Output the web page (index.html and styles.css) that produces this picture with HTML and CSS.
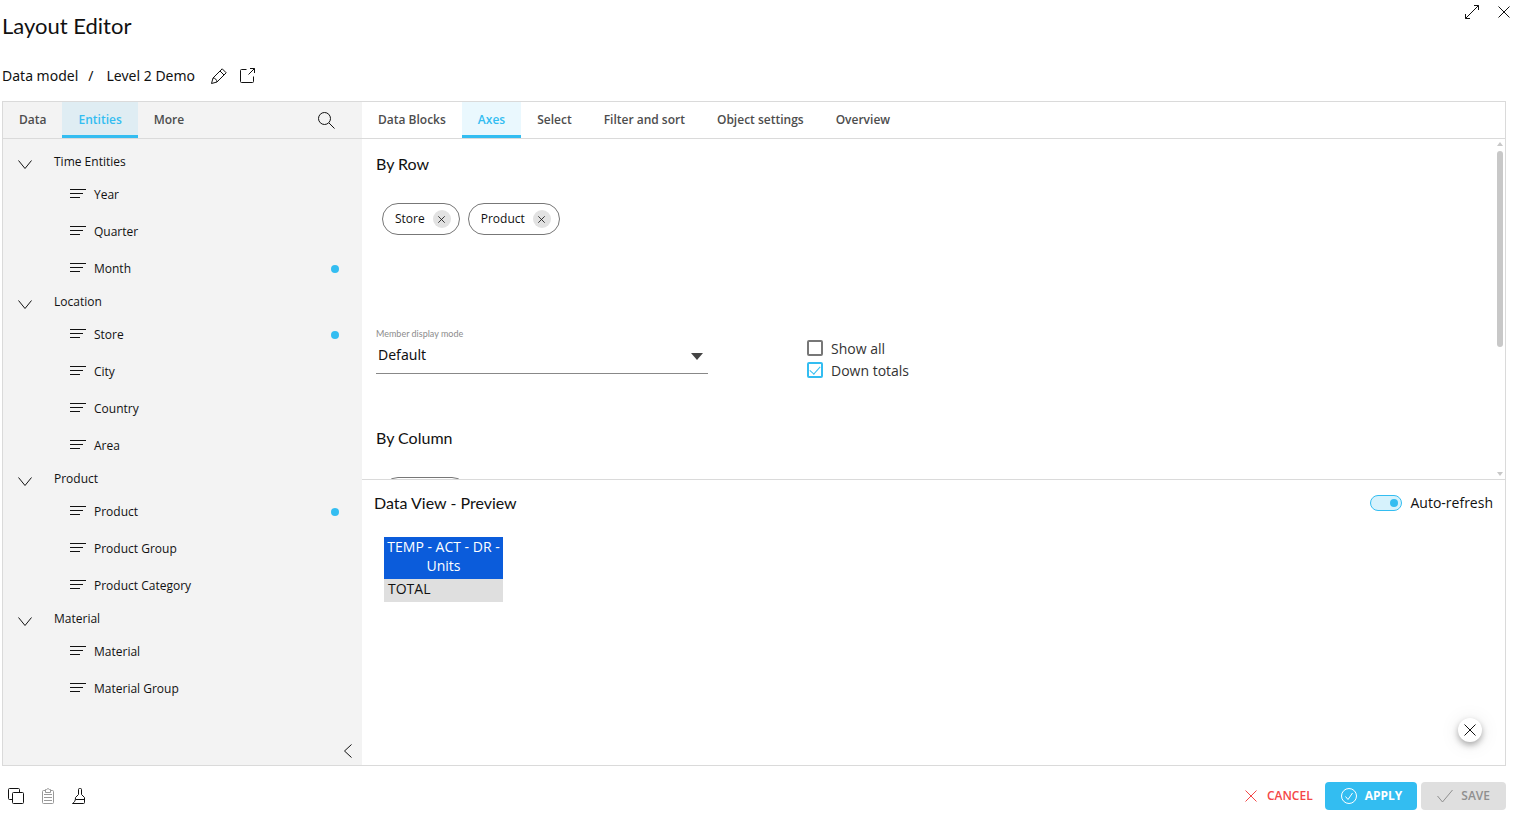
FILE: index.html
```html
<!DOCTYPE html>
<html lang="en">
<head>
    <meta charset="UTF-8">
    <meta name="viewport" content="width=device-width, initial-scale=1.0">
    <title>Layout Editor</title>
    <link rel="stylesheet" href="styles.css">
</head>
<body>
    <!-- shared icons -->
    <svg class="sprite" aria-hidden="true">
        <symbol id="i-close" viewBox="0 0 12 12"><path d="M0.5 0.5L11.5 11.5M11.5 0.5L0.5 11.5"/></symbol>
        <symbol id="i-down" viewBox="0 0 14 10"><path d="M0.5 0.5L7 8.5L13.5 0.5"/></symbol>
        <symbol id="i-lines" viewBox="0 0 16 10"><path d="M0 0.5H16M0 4.5H13M0 8.5H10"/></symbol>
    </svg>

    <div class="page">
        <header class="header">
            <h1>Layout Editor</h1>
            <div class="window-buttons">
                <button class="icon-btn" aria-label="Expand">
                    <svg width="14" height="14" viewBox="0 0 14 14"><path d="M0.5 13.5L13.5 0.5M9 0.5H13.5V5M0.5 9V13.5H5"/></svg>
                </button>
                <button class="icon-btn" aria-label="Close">
                    <svg width="12" height="12"><use href="#i-close"/></svg>
                </button>
            </div>
        </header>

        <nav class="breadcrumb">
            <span>Data model</span>
            <span class="slash">/</span>
            <span>Level 2 Demo</span>
            <div class="breadcrumb-tools">
                <button class="icon-btn" aria-label="Rename">
                    <svg width="16" height="16" viewBox="0 0 16 16"><path d="M0.5 15.5L2 10L11.2 0.8L15.2 4.8L6 14L0.5 15.5ZM9 3L13 7M2 10C4 9.8 6 12 6 14M6.5 5.5L10 2"/></svg>
                </button>
                <button class="icon-btn" aria-label="Open in new window">
                    <svg width="15" height="15" viewBox="0 0 15 15"><path d="M6.5 1.5H1.5Q0.5 1.5 0.5 2.5V13.5Q0.5 14.5 1.5 14.5H12.5Q13.5 14.5 13.5 13.5V8.5M10 0.5H14.5V5M14.5 0.5L8.5 6.5"/></svg>
                </button>
            </div>
        </nav>

        <div class="editor">
            <aside class="sidebar">
                <div class="tabs">
                    <button class="tab">Data</button>
                    <button class="tab active">Entities</button>
                    <button class="tab">More</button>
                    <button class="icon-btn search" aria-label="Search">
                        <svg width="17" height="17" viewBox="0 0 17 17"><circle cx="6.5" cy="6.5" r="6"/><path d="M11 11L16.5 16.5"/></svg>
                    </button>
                </div>
                <div class="tree">
                    <h3><svg width="14" height="10"><use href="#i-down"/></svg>Time Entities</h3>
                    <ul>
                        <li><svg width="16" height="10"><use href="#i-lines"/></svg>Year</li>
                        <li><svg width="16" height="10"><use href="#i-lines"/></svg>Quarter</li>
                        <li class="used"><svg width="16" height="10"><use href="#i-lines"/></svg>Month</li>
                    </ul>
                    <h3><svg width="14" height="10"><use href="#i-down"/></svg>Location</h3>
                    <ul>
                        <li class="used"><svg width="16" height="10"><use href="#i-lines"/></svg>Store</li>
                        <li><svg width="16" height="10"><use href="#i-lines"/></svg>City</li>
                        <li><svg width="16" height="10"><use href="#i-lines"/></svg>Country</li>
                        <li><svg width="16" height="10"><use href="#i-lines"/></svg>Area</li>
                    </ul>
                    <h3><svg width="14" height="10"><use href="#i-down"/></svg>Product</h3>
                    <ul>
                        <li class="used"><svg width="16" height="10"><use href="#i-lines"/></svg>Product</li>
                        <li><svg width="16" height="10"><use href="#i-lines"/></svg>Product Group</li>
                        <li><svg width="16" height="10"><use href="#i-lines"/></svg>Product Category</li>
                    </ul>
                    <h3><svg width="14" height="10"><use href="#i-down"/></svg>Material</h3>
                    <ul>
                        <li><svg width="16" height="10"><use href="#i-lines"/></svg>Material</li>
                        <li><svg width="16" height="10"><use href="#i-lines"/></svg>Material Group</li>
                    </ul>
                </div>
                <button class="icon-btn collapse" aria-label="Collapse panel">
                    <svg width="8" height="14" viewBox="0 0 8 14"><path d="M7.5 0.5L0.5 7L7.5 13.5"/></svg>
                </button>
            </aside>

            <main class="main">
                <div class="tabs">
                    <button class="tab">Data Blocks</button>
                    <button class="tab active">Axes</button>
                    <button class="tab">Select</button>
                    <button class="tab">Filter and sort</button>
                    <button class="tab">Object settings</button>
                    <button class="tab">Overview</button>
                </div>

                <div class="axes">
                    <div class="axes-content">
                        <section class="axis">
                            <h2>By Row</h2>
                            <div class="chips">
                                <span class="chip">Store <button aria-label="Remove Store"><svg width="7" height="7"><use href="#i-close"/></svg></button></span>
                                <span class="chip">Product <button aria-label="Remove Product"><svg width="7" height="7"><use href="#i-close"/></svg></button></span>
                            </div>
                            <div class="options">
                                <div class="field">
                                    <label for="row-mode">Member display mode</label>
                                    <div class="select">
                                        <select id="row-mode">
                                            <option>Default</option>
                                        </select>
                                        <svg width="12" height="7" viewBox="0 0 12 7"><path d="M0 0H12L6 7Z"/></svg>
                                    </div>
                                </div>
                                <div class="checks">
                                    <label><input type="checkbox"> Show all</label>
                                    <label><input type="checkbox" checked> Down totals</label>
                                </div>
                            </div>
                        </section>
                        <section class="axis">
                            <h2>By Column</h2>
                            <div class="chips">
                                <span class="chip empty"></span>
                            </div>
                        </section>
                    </div>
                    <div class="scrollbar">
                        <svg width="6" height="4" viewBox="0 0 6 4"><path d="M0 4L3 0L6 4Z"/></svg>
                        <div class="track"><div class="thumb"></div></div>
                        <svg width="6" height="4" viewBox="0 0 6 4"><path d="M0 0L3 4L6 0Z"/></svg>
                    </div>
                </div>

                <section class="preview">
                    <div class="preview-head">
                        <h2>Data View - Preview</h2>
                        <label class="toggle"><input type="checkbox" checked> Auto-refresh</label>
                    </div>
                    <table>
                        <tr><th>TEMP - ACT - DR - Units</th></tr>
                        <tr><td>TOTAL</td></tr>
                    </table>
                    <button class="close-preview" aria-label="Close preview">
                        <svg width="12" height="12"><use href="#i-close"/></svg>
                    </button>
                </section>
            </main>
        </div>

        <footer class="footer">
            <div class="tools">
                <button class="icon-btn" aria-label="Copy">
                    <svg width="16" height="16" viewBox="0 0 16 16"><path d="M4.5 11.5H1.5Q0.5 11.5 0.5 10.5V1.5Q0.5 0.5 1.5 0.5H10.5Q11.5 0.5 11.5 1.5V4.5"/><rect x="4.5" y="4.5" width="11" height="11" rx="1"/></svg>
                </button>
                <button class="icon-btn" aria-label="Paste" disabled>
                    <svg width="12" height="16" viewBox="0 0 12 16"><path d="M3.5 2.5H1.5Q0.5 2.5 0.5 3.5V14.5Q0.5 15.5 1.5 15.5H10.5Q11.5 15.5 11.5 14.5V3.5Q11.5 2.5 10.5 2.5H8.5M3.5 1.5H4.5Q6 -0.5 7.5 1.5H8.5V4.5H3.5ZM2 6.5H10M2 9.5H10M2 12.5H10"/></svg>
                </button>
                <button class="icon-btn" aria-label="Clear format">
                    <svg width="14" height="16" viewBox="0 0 14 16"><path d="M6.5 6.5V1.5Q6.5 0.5 7.5 0.5H8.5Q9.5 0.5 9.5 1.5V6.5L12.5 9.5V14.5Q12.5 15.5 11.5 15.5H0.5C2.5 14 3.5 13 3.5 9.5L6.5 6.5M3.5 11.5H12.5"/></svg>
                </button>
            </div>
            <div class="actions">
                <button class="btn cancel"><svg width="12" height="12"><use href="#i-close"/></svg>CANCEL</button>
                <button class="btn apply">
                    <svg width="16" height="16" viewBox="0 0 16 16"><circle cx="8" cy="8" r="7.5"/><path d="M4.5 8.5L7 11.5L11.5 5"/></svg>APPLY
                </button>
                <button class="btn save" disabled>
                    <svg width="16" height="14" viewBox="0 0 16 14"><path d="M0.5 7L5.5 13L15.5 1"/></svg>SAVE
                </button>
            </div>
        </footer>
    </div>
</body>
</html>
```

FILE: styles.css
```css
* {
    box-sizing: border-box;
}

body {
    margin: 0;
    font-family: "Open Sans", "Noto Sans", sans-serif;
    font-size: 14px;
    line-height: 20px;
    color: #111;
    background-color: #fff;
}

h1, h2, h3, ul {
    margin: 0;
    padding: 0;
    font-weight: 400;
}

ul {
    list-style: none;
}

button, select {
    font: inherit;
    color: inherit;
    padding: 0;
    border: none;
    background: none;
}

svg {
    display: block;
    flex: none;
    fill: none;
    stroke: currentColor;
}

.sprite {
    display: none;
}

.page {
    display: flex;
    flex-direction: column;
    min-height: 100vh;
    padding: 0 8px 0 2px;
}

/* header */

.header {
    display: flex;
    justify-content: space-between;
    height: 52px;
}

.header h1 {
    padding-top: 12px;
    font-family: Lato, sans-serif;
    font-size: 22px;
    line-height: 28px;
}

.window-buttons {
    display: flex;
    gap: 19px;
    height: 24px;
    margin-right: -4px;
}

.icon-btn {
    display: flex;
    align-items: center;
}

.breadcrumb {
    display: flex;
    align-items: center;
    height: 49px;
    padding-bottom: 2px;
    font-family: "Noto Sans", sans-serif;
}

.slash {
    margin: 0 13px 0 10px;
}

.breadcrumb-tools {
    display: flex;
    gap: 13px;
    padding-left: 16px;
}

/* editor */

.editor {
    display: flex;
    flex: 1;
    border: 1px solid #dadada;
}

.sidebar {
    display: flex;
    flex-direction: column;
    flex: 0 0 359px;
    background-color: #f3f3f3;
}

.tabs {
    display: flex;
    height: 37px;
    border-bottom: 1px solid #dadada;
}

.tab {
    padding: 0 16px;
    border-top: 3px solid transparent;
    border-bottom: 3px solid transparent;
    font-size: 12px;
    font-weight: 600;
    color: #4d4d4d;
}

.tab.active {
    border-bottom-color: #33bdf1;
    background-color: rgba(51, 189, 241, 0.1);
    color: #33bdf1;
}

.search {
    margin: 0 27px 0 auto;
}

.tree {
    flex: 1;
    padding-top: 8px;
    font-size: 12px;
}

.tree h3 {
    display: flex;
    align-items: center;
    height: 29px;
    padding-left: 15px;
    font-size: 12px;
}

.tree h3 svg {
    margin: 6px 22px 0 0;
}

.tree li {
    display: flex;
    align-items: center;
    gap: 8px;
    height: 37px;
    padding: 0 23px 0 67px;
}

.tree li svg {
    margin-bottom: 2px;
}

.tree .used::after {
    content: "";
    width: 8px;
    height: 8px;
    margin-left: auto;
    border-radius: 50%;
    background-color: #33bdf1;
}

.collapse {
    align-self: flex-end;
    height: 28px;
    margin-right: 10px;
}

.main {
    display: flex;
    flex-direction: column;
    flex: 1;
    min-width: 0;
}

/* axes */

.axes {
    display: flex;
    flex: 341 0 0;
    min-height: 0;
    overflow: hidden;
    border-bottom: 1px solid #dadada;
}

.axes-content {
    flex: 1;
    height: 0;
    padding: 15px 14px 0;
}

.axis h2, .preview h2 {
    font-family: Lato, sans-serif;
    font-size: 16px;
    line-height: 20px;
}

.chips {
    display: flex;
    align-items: flex-start;
    gap: 8px;
    min-height: 124px;
    margin-top: 29px;
    padding-left: 6px;
}

.chip {
    display: flex;
    align-items: center;
    gap: 8px;
    height: 32px;
    padding: 0 8px 0 12px;
    border: 1px solid #777;
    border-radius: 16px;
    font-size: 12px;
}

.chip.empty {
    width: 86px;
}

.chip button {
    display: flex;
    align-items: center;
    justify-content: center;
    width: 18px;
    height: 18px;
    border-radius: 50%;
    background-color: #e2e2e2;
}

.chip svg {
    stroke-width: 1.4;
}

.options {
    display: flex;
    gap: 99px;
    margin-bottom: 46px;
}

.field {
    width: 332px;
}

.field label {
    display: block;
    font-family: Lato, sans-serif;
    font-size: 9px;
    line-height: 14px;
    color: #8c8c8c;
}

.select {
    display: flex;
    align-items: center;
    height: 33px;
    padding-right: 5px;
    border-bottom: 1px solid #888;
}

.select select {
    flex: 1;
    height: 32px;
    padding: 0 0 4px 2px;
    font-family: "Noto Sans", sans-serif;
    appearance: none;
}

.select svg {
    margin-bottom: 2px;
    fill: #444;
    stroke: none;
}

.checks {
    padding-top: 11px;
}

.checks label {
    display: flex;
    align-items: center;
    gap: 8px;
    height: 22px;
    color: #333;
}

.checks input {
    display: flex;
    justify-content: center;
    width: 16px;
    height: 16px;
    margin: 0 0 2px;
    border: 2px solid #777;
    border-radius: 2px;
    appearance: none;
}

.checks input:checked {
    border-color: #33bdf1;
}

.checks input:checked::after {
    content: "";
    width: 5px;
    height: 9px;
    border: solid #33bdf1;
    border-width: 0 1px 1px 0;
    transform: rotate(42deg);
}

.scrollbar {
    display: flex;
    flex-direction: column;
    align-items: center;
    width: 10px;
    padding: 3px 0;
}

.scrollbar svg {
    fill: #c8c8c8;
    stroke: none;
}

.track {
    flex: 1;
    padding: 5px 0;
}

.thumb {
    width: 6px;
    height: 62%;
    border-radius: 3px;
    background-color: #c8c8c8;
}

/* preview */

.preview {
    position: relative;
    flex: 260 0 0;
    padding: 13px 12px;
}

.preview-head {
    display: flex;
    justify-content: space-between;
    height: 20px;
}

.toggle {
    display: flex;
    align-items: center;
    gap: 9px;
}

.toggle input {
    display: flex;
    align-items: center;
    justify-content: flex-end;
    width: 32px;
    height: 16px;
    margin: 0;
    padding-right: 3px;
    border: 1px solid #33bdf1;
    border-radius: 8px;
    background-color: #d6f2fc;
    appearance: none;
}

.toggle input::after {
    content: "";
    width: 8px;
    height: 8px;
    border-radius: 50%;
    background-color: #33bdf1;
}

.preview table {
    width: 119px;
    margin: 24px 0 0 10px;
    border-collapse: collapse;
    line-height: 19px;
}

.preview th {
    padding: 0 2px 4px;
    font-weight: 400;
    color: #fff;
    background-color: #0b5cdb;
}

.preview td {
    padding: 0 4px 4px;
    background-color: #dfdfdf;
}

.close-preview {
    position: absolute;
    right: 23px;
    bottom: 23px;
    display: flex;
    align-items: center;
    justify-content: center;
    width: 24px;
    height: 24px;
    border-radius: 50%;
    background-color: #fff;
    box-shadow: 0 3px 6px rgba(0, 0, 0, 0.3), 0 2px 20px rgba(0, 0, 0, 0.1);
}

/* footer */

.footer {
    display: flex;
    justify-content: space-between;
    height: 53px;
    padding-top: 16px;
}

.tools {
    display: flex;
    gap: 18px;
    height: 28px;
    padding-left: 6px;
}

.tools button:disabled {
    color: #999;
}

.actions {
    display: flex;
    gap: 4px;
}

.btn {
    display: flex;
    align-items: center;
    gap: 8px;
    height: 28px;
    padding: 0 16px;
    border-radius: 4px;
    font-size: 12px;
    font-weight: 600;
}

.cancel {
    gap: 10px;
    padding: 0 8px;
    color: #f44747;
}

.apply {
    padding-right: 15px;
    color: #fff;
    background-color: #33bdf1;
    font-weight: 700;
}

.save {
    color: #8f8f8f;
    background-color: #dfdfdf;
}
```
